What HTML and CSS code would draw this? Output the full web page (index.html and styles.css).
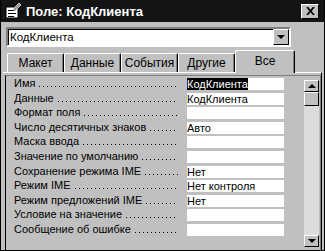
FILE: index.html
```html
<!DOCTYPE html>
<html lang="ru">
  <head>
    <meta charset="UTF-8" />
    <title>Поле: КодКлиента</title>
    <link rel="stylesheet" href="styles.css">
  </head>
  <body>
    <div class="window">
      <div class="titlebar">
        <svg class="app-icon" width="16" height="16" viewBox="0 0 16 16">
          <rect x="1" y="4" width="12" height="11" fill="#fff" stroke="#000"/>
          <rect x="3" y="7" width="8" height="1" fill="#000"/>
          <rect x="3" y="10" width="8" height="1" fill="#000"/>
          <rect x="3" y="13" width="6" height="1" fill="#000"/>
          <path d="M8 6 L14 0 L16 2 L10 8 Z" fill="#999" stroke="#fff" stroke-width="0.6"/>
        </svg>
        <span class="title">Поле: КодКлиента</span>
        <span class="close-btn">
          <svg width="9" height="8" viewBox="0 0 9 8">
            <path d="M1 0 L8 8 M8 0 L1 8" stroke="#000" stroke-width="1.8"/>
          </svg>
        </span>
      </div>

      <div class="combo">
        <span class="combo-text">КодКлиента</span>
        <span class="combo-btn"><span class="arrow-down"></span></span>
      </div>

      <div class="tabs">
        <div class="tab">Макет</div>
        <div class="tab">Данные</div>
        <div class="tab">События</div>
        <div class="tab">Другие</div>
        <div class="tab active">Все</div>
      </div>

      <div class="sheet">
        <div class="props">
          <div class="rows">
            <div class="row"><span class="label"><span class="name">Имя</span><span class="dots"></span></span><span class="value"><span class="selected">КодКлиента</span></span></div>
            <div class="row"><span class="label"><span class="name">Данные</span><span class="dots"></span></span><span class="value">КодКлиента</span></div>
            <div class="row"><span class="label"><span class="name">Формат поля</span><span class="dots"></span></span><span class="value"></span></div>
            <div class="row"><span class="label"><span class="name">Число десятичных знаков</span><span class="dots"></span></span><span class="value">Авто</span></div>
            <div class="row"><span class="label"><span class="name">Маска ввода</span><span class="dots"></span></span><span class="value"></span></div>
            <div class="row"><span class="label"><span class="name">Значение по умолчанию</span><span class="dots"></span></span><span class="value"></span></div>
            <div class="row"><span class="label"><span class="name">Сохранение режима IME</span><span class="dots"></span></span><span class="value">Нет</span></div>
            <div class="row"><span class="label"><span class="name">Режим IME</span><span class="dots"></span></span><span class="value">Нет контроля</span></div>
            <div class="row"><span class="label"><span class="name">Режим предложений IME</span><span class="dots"></span></span><span class="value">Нет</span></div>
            <div class="row"><span class="label"><span class="name">Условие на значение</span><span class="dots"></span></span><span class="value"></span></div>
            <div class="row"><span class="label"><span class="name">Сообщение об ошибке</span><span class="dots"></span></span><span class="value"></span></div>
          </div>
          <div class="scrollbar">
            <span class="sb-btn"><span class="arrow-up"></span></span>
            <span class="sb-thumb"></span>
            <span class="sb-track"></span>
            <span class="sb-btn"><span class="arrow-down"></span></span>
          </div>
        </div>
      </div>
    </div>
  </body>
</html>
```

FILE: styles.css
```css
* {
  margin: 0;
  padding: 0;
  box-sizing: border-box;
}

body {
  width: 325px;
  height: 251px;
  overflow: hidden;
  background-color: #c0c0c0;
  font-family: "Liberation Sans", Arial, sans-serif;
  font-size: 12px;
  color: #000;
}

.window {
  width: 325px;
  height: 251px;
  border-left: 1px solid #000;
  border-right: 1px solid #000;
  border-bottom: 1px solid #000;
  padding: 0 2px 2px 2px;
}

.titlebar {
  display: flex;
  align-items: center;
  height: 22px;
  margin: 0 -2px;
  padding: 0 4px;
  background-color: #141414;
  color: white;
}

.app-icon {
  margin-right: 5px;
}

.title {
  flex: 1;
  font-size: 13px;
  font-weight: bold;
}

.close-btn {
  display: flex;
  align-items: center;
  justify-content: center;
  width: 18px;
  height: 15px;
  margin-right: 1px;
  background-color: #c0c0c0;
  border: 1px solid;
  border-color: #fff #000 #000 #fff;
}

.combo {
  display: flex;
  width: 285px;
  height: 20px;
  margin: 5px 0 0 3px;
  background: white;
  border: 2px solid;
  border-color: #808080 #fff #fff #808080;
  box-shadow: inset 1px 1px 0 #000;
}

.combo-text {
  flex: 1;
  padding: 1px 0 0 2px;
  font-size: 11.5px;
  line-height: 15px;
}

.combo-btn {
  display: flex;
  align-items: center;
  justify-content: center;
  width: 16px;
  background: #c0c0c0;
  border: 1px solid;
  border-color: #fff #000 #000 #fff;
}

.arrow-down,
.arrow-up {
  width: 0;
  height: 0;
  border-left: 4px solid transparent;
  border-right: 4px solid transparent;
}

.arrow-down {
  border-top: 4px solid #000;
}

.arrow-up {
  border-bottom: 4px solid #000;
}

.tabs {
  display: flex;
  align-items: flex-end;
  height: 25px;
  padding-left: 4px;
}

.tab {
  width: 57px;
  height: 19px;
  padding-top: 2px;
  text-align: center;
  border: 1px solid;
  border-bottom: none;
  border-color: #fff #000 #000 #fff;
  border-radius: 2px 2px 0 0;
  box-shadow: inset -1px 0 0 #808080;
}

.tab.active {
  width: 60px;
  height: 23px;
  margin-bottom: -1px;
  padding-top: 3px;
  background-color: #c0c0c0;
  position: relative;
}

.sheet {
  height: 180px;
  border-top: 1px solid #fff;
  border-right: 1px solid #000;
  padding: 2px 0 0 2px;
}

.props {
  display: flex;
  height: 176px;
  border: 1px solid;
  border-color: #808080 #808080 #000 #000;
  box-shadow: 0 1px 0 #000, 1px 0 0 #000;
}

.rows {
  flex: 1;
  padding: 1px 20px 0 8px;
  background: #c0c0c0;
}

.row {
  display: flex;
  height: 14.6px;
  overflow: hidden;
  font-size: 11px;
}

.label {
  display: flex;
  flex: 1;
  margin-right: 9px;
  line-height: 13px;
}

.name {
  white-space: nowrap;
}

.dots {
  flex: 1;
  margin-left: 3px;
  background-image: linear-gradient(to right, #000 1px, transparent 1px);
  background-size: 4px 1px;
  background-repeat: repeat-x;
  background-position: left 1px top 9px;
}

.value {
  width: 97px;
  height: 12px;
  margin-top: 1px;
  background: white;
  line-height: 12px;
}

.selected {
  display: inline-block;
  background: #000;
  color: #fff;
}

.scrollbar {
  display: flex;
  flex-direction: column;
  width: 15px;
  margin: 4px 1px 3px 0;
  background-color: #dcdcdc;
}

.sb-btn,
.sb-thumb {
  display: flex;
  align-items: center;
  justify-content: center;
  height: 12px;
  background: #c0c0c0;
  border: 1px solid;
  border-color: #fff #000 #000 #fff;
}

.sb-thumb {
  height: 14px;
}

.sb-track {
  flex: 1;
}
```
